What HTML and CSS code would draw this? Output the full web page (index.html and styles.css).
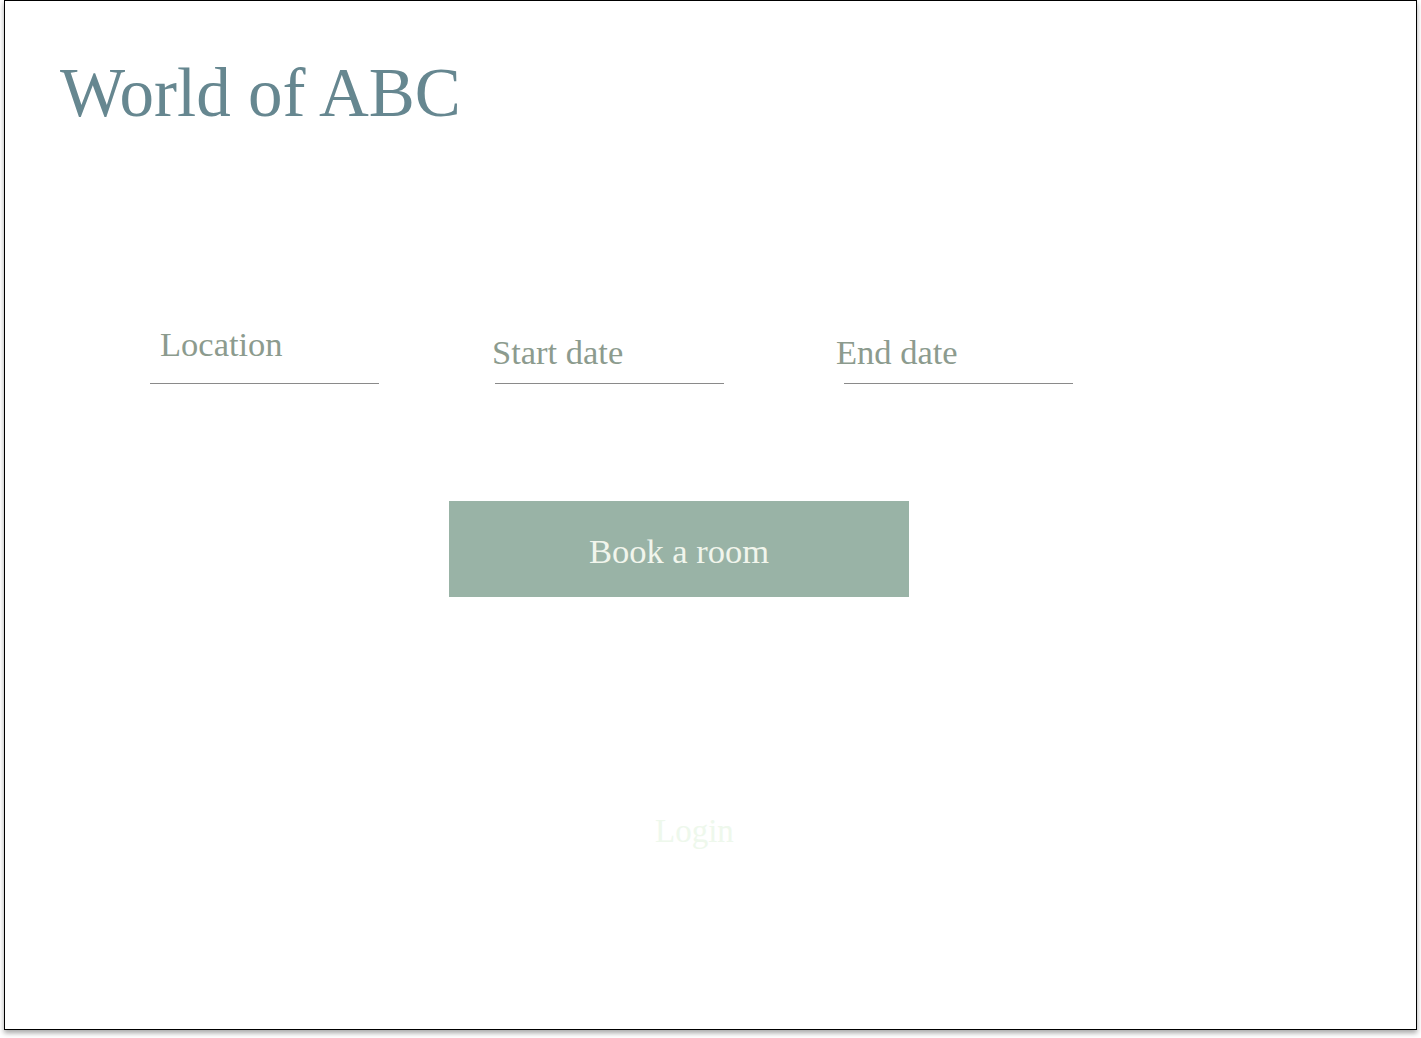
FILE: index.html
```html
<!DOCTYPE html>
<html lang="en">
<head>
<meta charset="utf-8">
<title>World of ABC</title>
<link rel="stylesheet" href="styles.css">
</head>
<body>
<div class="frame">
  <h1 class="title">World of ABC</h1>
  <form class="search">
    <div class="fields">
      <label class="field field-location"><span class="placeholder">Location</span></label>
      <label class="field field-start"><span class="placeholder">Start date</span></label>
      <label class="field field-end"><span class="placeholder">End date</span></label>
    </div>
    <button type="button" class="book">Book a room</button>
  </form>
  <a class="login" href="#">Login</a>
</div>
</body>
</html>
```

FILE: styles.css
```css
* { box-sizing: border-box; }
html, body { margin: 0; padding: 0; background: #fff; }
body {
  font-family: "Liberation Serif", "Times New Roman", serif;
  width: 1421px;
  height: 1038px;
  overflow: hidden;
}
.frame {
  margin-left: 4px;
  width: 1413px;
  height: 1030px;
  border: 1px solid #000;
  background: #fff;
  box-shadow: 0 3px 5px rgba(0, 0, 0, 0.35);
  display: flex;
  flex-direction: column;
}
.title {
  margin: 54px 0 0 55px;
  font-size: 69px;
  line-height: 76px;
  font-weight: normal;
  color: #668790;
}
.search {
  display: flex;
  flex-direction: column;
  margin: 192px 0 0 0;
}
.fields {
  display: flex;
  padding-left: 145px;
}
.field {
  width: 229px;
  height: 61px;
  border-bottom: 1px solid #8a8a8a;
  display: flex;
  align-items: flex-end;
  font-size: 34.5px;
  line-height: 40px;
  color: #8c9b8e;
}
.field-location { padding: 0 0 19px 10px; }
.field-start { margin-left: 116px; padding: 0 0 11px 0; }
.field-start .placeholder { margin-left: -3px; }
.field-end { margin-left: 120px; padding: 0 0 11px 0; }
.field-end .placeholder { margin-left: -8px; }
.placeholder { white-space: nowrap; }
.book {
  margin: 117px 0 0 444px;
  width: 460px;
  height: 96px;
  border: 0;
  background: #99b3a6;
  color: #f1f5ec;
  font-family: inherit;
  font-size: 34.5px;
  padding: 4px 0 0 0;
  cursor: pointer;
}
.login {
  align-self: flex-start;
  margin: 214px 0 0 650px;
  font-size: 33px;
  line-height: 40px;
  color: #eef8ec;
  text-decoration: none;
}
```
